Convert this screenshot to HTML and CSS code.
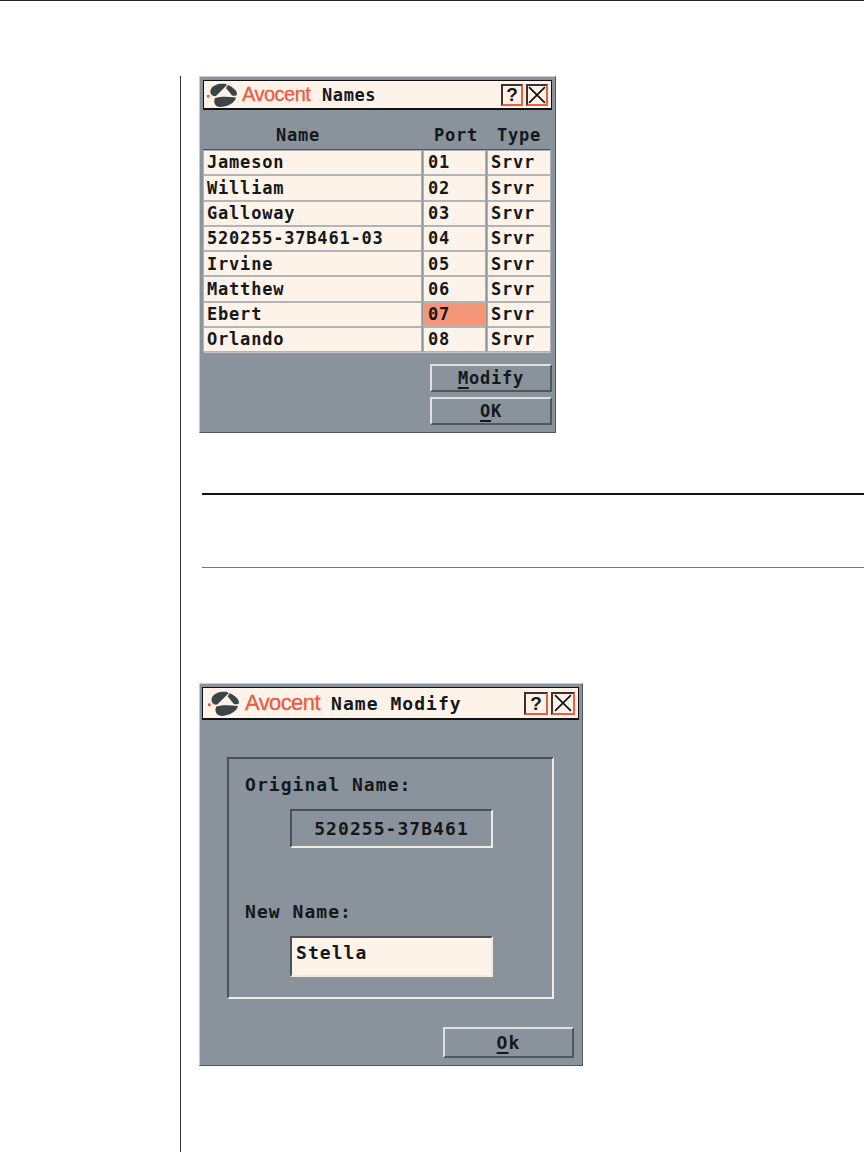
FILE: index.html
```html
<!DOCTYPE html>
<html lang="en">
<head>
    <meta charset="UTF-8">
    <title>Names</title>
    <link rel="stylesheet" href="styles.css">
</head>
<body>
    <div class="top-rule"></div>

    <main class="content">

        <!-- Names dialog -->
        <section class="dialog names">
            <div class="titlebar">
                <svg class="logo" viewBox="0 0 30 24">
                    <rect x="0" y="12" width="2.500" height="2.500" fill="#e8513c"/>
                    <path fill="#3b4447" d="M4 6C6 2 12 0 19 1L20 2L9 13C5 14 2 10 4 6Z"/>
                    <path fill="#3b4447" d="M21 2C26 4 30 8 30 11C30 13 27 13 25 12.500L19 5Z"/>
                    <path fill="#3b4447" d="M8 15C14 13 22 13.500 29 14.500C28 20 20 24 13 24C8 24 6 19 8 15Z"/>
                </svg>
                <span class="brand">Avocent</span>
                <span class="title">Names</span>
                <span class="tool-btn help">?</span>
                <span class="tool-btn close">
                    <svg viewBox="0 0 17 17"><path d="M1 1L16 16M16 1L1 16" stroke="#111" stroke-width="1.600" fill="none"/></svg>
                </span>
            </div>

            <div class="col-heads">
                <span class="head-name">Name</span>
                <span>Port</span>
                <span>Type</span>
            </div>

            <div class="name-table">
                <div class="cell">Jameson</div><div class="cell">01</div><div class="cell">Srvr</div>
                <div class="cell">William</div><div class="cell">02</div><div class="cell">Srvr</div>
                <div class="cell">Galloway</div><div class="cell">03</div><div class="cell">Srvr</div>
                <div class="cell">520255-37B461-03</div><div class="cell">04</div><div class="cell">Srvr</div>
                <div class="cell">Irvine</div><div class="cell">05</div><div class="cell">Srvr</div>
                <div class="cell">Matthew</div><div class="cell">06</div><div class="cell">Srvr</div>
                <div class="cell">Ebert</div><div class="cell selected">07</div><div class="cell">Srvr</div>
                <div class="cell">Orlando</div><div class="cell">08</div><div class="cell">Srvr</div>
            </div>

            <div class="actions">
                <div class="btn wide"><u>M</u>odify</div>
                <div class="btn wide"><u>O</u>K</div>
            </div>
        </section>

        <div class="note"></div>

        <!-- Name Modify dialog -->
        <section class="dialog modify">
            <div class="titlebar">
                <svg class="logo" viewBox="0 0 30 24">
                    <rect x="0" y="12" width="2.500" height="2.500" fill="#e8513c"/>
                    <path fill="#3b4447" d="M4 6C6 2 12 0 19 1L20 2L9 13C5 14 2 10 4 6Z"/>
                    <path fill="#3b4447" d="M21 2C26 4 30 8 30 11C30 13 27 13 25 12.500L19 5Z"/>
                    <path fill="#3b4447" d="M8 15C14 13 22 13.500 29 14.500C28 20 20 24 13 24C8 24 6 19 8 15Z"/>
                </svg>
                <span class="brand">Avocent</span>
                <span class="title">Name Modify</span>
                <span class="tool-btn help">?</span>
                <span class="tool-btn close">
                    <svg viewBox="0 0 17 17"><path d="M1 1L16 16M16 1L1 16" stroke="#111" stroke-width="1.600" fill="none"/></svg>
                </span>
            </div>

            <div class="group">
                <div class="field-label">Original Name:</div>
                <div class="field readonly">520255-37B461</div>
                <div class="field-label second">New Name:</div>
                <div class="field editable">Stella</div>
            </div>

            <div class="actions">
                <div class="btn ok"><u>O</u>k</div>
            </div>
        </section>

    </main>
</body>
</html>
```

FILE: styles.css
```css
html, body {
    margin: 0;
    padding: 0;
    background: #fff;
}

body {
    height: 1152px;
    overflow: hidden;
    font-family: "DejaVu Sans Mono", "Liberation Mono", monospace;
    font-weight: bold;
    font-size: 17px;
    letter-spacing: 0.8px;
    color: #14181c;
}

.top-rule {
    height: 1px;
    background: #222;
}

.content {
    margin: 75px 0 0 180px;
    height: 1076px;
    padding-left: 18px;
    border-left: 1px solid #333;
}

/* dialogs */
.dialog {
    box-sizing: border-box;
    display: flex;
    flex-direction: column;
    background: #8a939b;
    border: 1px solid #4f565c;
    border-top-color: #c9cccf;
    border-left-color: #c9cccf;
    padding: 3px;
}

.dialog.names {
    margin-top: 1px;
    width: 357px;
    height: 357px;
}

.dialog.modify {
    width: 384px;
    height: 383px;
    padding-left: 2px;
    font-size: 18px;
    letter-spacing: 1.050px;
}

.titlebar {
    box-sizing: border-box;
    display: flex;
    align-items: center;
    height: 30px;
    background: #fdf3e8;
    border: 1px solid #111;
    border-bottom-width: 2px;
    padding: 0 3px;
}

.modify .titlebar {
    height: 33px;
    padding-left: 5px;
}

.logo {
    width: 30px;
    height: 24px;
    flex: none;
}

.modify .logo {
    width: 31px;
    height: 25px;
}

.brand {
    margin-left: 5px;
    width: 80px;
    font-family: "Liberation Sans", sans-serif;
    font-weight: normal;
    font-size: 20px;
    letter-spacing: -0.5px;
    -webkit-text-stroke: 0.3px #ea5a44;
    color: #ea5a44;
}

.modify .brand {
    margin-left: 6px;
    width: 86px;
    font-size: 22px;
    letter-spacing: -0.6px;
}

.title {
    flex: 1;
    letter-spacing: 0.6px;
}

.modify .title {
    letter-spacing: 1.050px;
}

.tool-btn {
    box-sizing: border-box;
    width: 22px;
    height: 22px;
    margin-left: 3px;
    display: flex;
    align-items: center;
    justify-content: center;
    border: 2px solid #e8604a;
    border-top-color: #41302c;
    border-left-color: #41302c;
    letter-spacing: 0;
    font-family: "Liberation Sans", sans-serif;
    font-size: 19px;
    line-height: 1;
}

.modify .tool-btn {
    width: 24px;
    height: 23px;
}

.tool-btn svg {
    width: 18px;
    height: 18px;
}

/* names table */
.col-heads {
    display: grid;
    grid-template-columns: 221px 64px 62px;
    height: 39px;
    align-items: center;
    text-align: center;
    padding-top: 10px;
    box-sizing: border-box;
}

.head-name {
    padding-right: 31px;
}

.name-table {
    display: grid;
    grid-template-columns: 217px 61px 62px;
    grid-auto-rows: 23.300px;
    column-gap: 3px;
    row-gap: 2px;
    padding: 1px 2px 1px 0;
    border-top: 1px solid #4a5157;
    border-left: 1px solid #4a5157;
    border-right: 1px solid #c0c4c7;
    border-bottom: 1px solid #c0c4c7;
    width: 348px;
    box-sizing: border-box;
}

.cell {
    display: flex;
    align-items: center;
    padding: 0 0 0.6px 3px;
    background: #fdf3e8;
    outline: 1px solid #aeb4b8;
}

.cell:nth-child(3n+2) {
    padding-left: 4px;
}

.cell.selected {
    background: #f49677;
}

/* buttons */
.actions {
    display: flex;
    flex-direction: column;
    align-items: flex-end;
    gap: 5px;
    margin-top: 11px;
}

.btn {
    box-sizing: border-box;
    display: flex;
    align-items: center;
    justify-content: center;
    border: 1px solid #4f565c;
    border-top: 2px solid #dfe0df;
    border-left: 2px solid #dfe0df;
    border-bottom-width: 2px;
    border-right-width: 2px;
}

.btn u {
    text-underline-offset: 3px;
    text-decoration-thickness: 2px;
}

.btn.wide {
    width: 122px;
    height: 28px;
}

.btn.ok {
    width: 131px;
    height: 31px;
    margin-right: 5px;
}

.modify .actions {
    margin-top: 28px;
}

/* Name Modify group */
.group {
    box-sizing: border-box;
    width: 327px;
    height: 242px;
    margin: 37px 0 0 25px;
    padding: 16px 0 0 16px;
    border: 2px solid #f1ece3;
    border-top-color: #4a5157;
    border-left-color: #4a5157;
}

.field-label {
    line-height: 20px;
}

.field-label.second {
    margin-top: 54px;
}

.field {
    box-sizing: border-box;
    width: 203px;
    margin: 14px 0 0 45px;
    border: 2px solid #f1ece3;
    border-top-color: #4a5157;
    border-left-color: #4a5157;
}

.field.readonly {
    height: 39px;
    line-height: 35px;
    text-align: center;
}

.field.editable {
    height: 41px;
    margin-top: 14px;
    padding: 3px 0 0 4px;
    background: #fdf3e8;
    line-height: 24px;
}

/* note rules */
.note {
    box-sizing: border-box;
    height: 75px;
    margin: 60px 0 115px 3px;
    border-top: 2px solid #111;
    border-bottom: 1px solid #777;
}
```
